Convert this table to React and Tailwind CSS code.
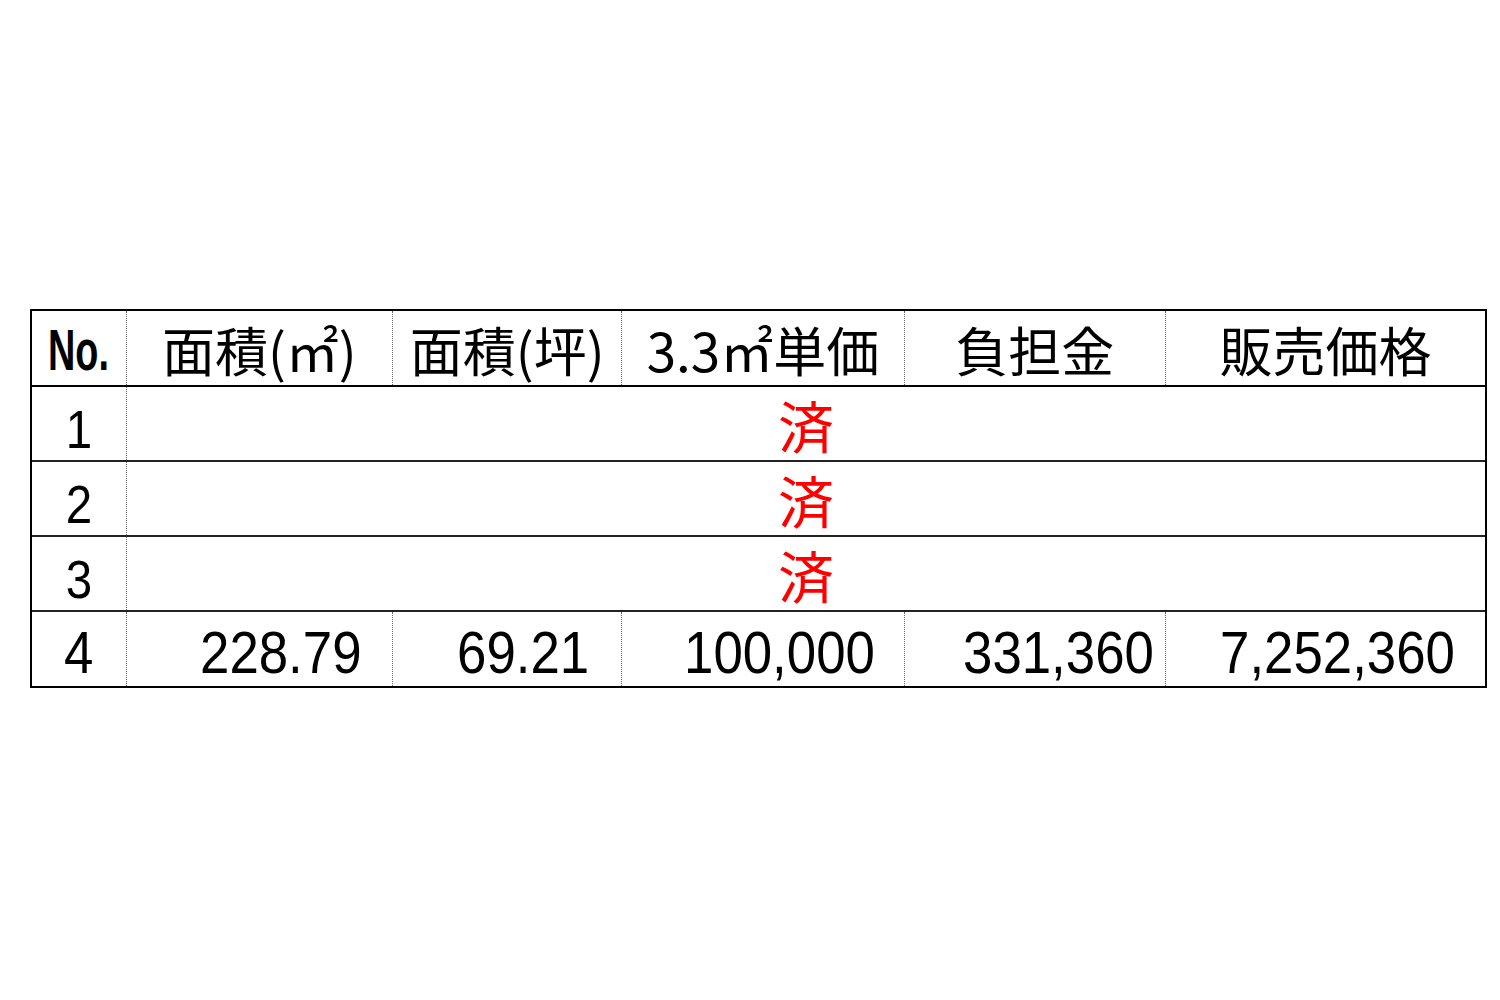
const cols = ["w-[95px]", "w-[267px]", "w-[230px]", "w-[283px]", "w-[262px]", "w-[320px]"];

const headers = ["面積(㎡)", "面積(坪)", "3.3㎡単価", "負担金", "販売価格"];

const lastRow = [
  { v: "228.79", pad: "pr-[30px]" },
  { v: "69.21", pad: "pr-[32px]" },
  { v: "100,000", pad: "pr-[29px]" },
  { v: "331,360", pad: "pr-[11px]" },
  { v: "7,252,360", pad: "pr-[30px]" },
];

const divider = "border-r border-dotted border-[#666]";

export default function App() {
  return (
    <div className="min-h-[1000px] w-[1500px] bg-white pt-[309px] pl-[30px]">
      <div className="w-[1457px] border-2 border-black text-black">
        {/* header */}
        <div className="flex h-[76px] border-b-2 border-black">
          <div className={`${cols[0]} ${divider} flex items-center justify-center pt-[4px]`}>
            <span className="inline-block scale-x-[0.7] scale-y-[1.05] font-['Liberation_Sans',sans-serif] text-[54px] font-bold leading-none">
              No.
            </span>
          </div>
          {headers.map((h, i) => (
            <div
              key={h}
              className={`${cols[i + 1]} ${i < 4 ? divider : ""} flex items-center justify-center pt-[2px] font-['Noto_Sans_CJK_JP',sans-serif] text-[53px] leading-none`}
            >
              {h}
            </div>
          ))}
        </div>

        {/* sold rows */}
        {[1, 2, 3].map((n) => (
          <div key={n} className="flex h-[75px] border-b-2 border-[#222]">
            <div className={`${cols[0]} ${divider} flex items-center justify-center pt-[10px]`}>
              <span className="inline-block scale-x-[0.88] font-['Liberation_Sans',sans-serif] text-[54px] leading-none">
                {n}
              </span>
            </div>
            <div className="flex flex-1 items-center justify-center font-['Noto_Sans_CJK_JP',sans-serif] text-[56px] leading-none text-[#f00]">
              済
            </div>
          </div>
        ))}

        {/* row 4 */}
        <div className="flex h-[74px]">
          <div className={`${cols[0]} ${divider} flex items-center justify-center pt-[8px]`}>
            <span className="inline-block scale-x-[0.88] font-['Liberation_Sans',sans-serif] text-[60px] leading-none">
              4
            </span>
          </div>
          {lastRow.map((c, i) => (
            <div
              key={c.v}
              className={`${cols[i + 1]} ${i < 4 ? divider : ""} flex items-center justify-end pt-[8px] ${c.pad}`}
            >
              <span className="inline-block origin-right scale-x-[0.88] font-['Liberation_Sans',sans-serif] text-[60px] leading-none">
                {c.v}
              </span>
            </div>
          ))}
        </div>
      </div>
    </div>
  );
}
